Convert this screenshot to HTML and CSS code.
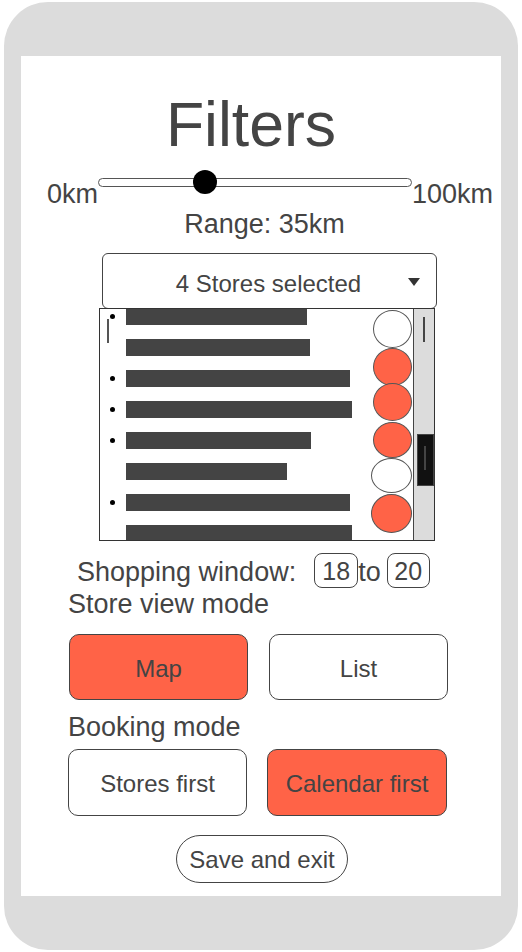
FILE: index.html
```html
<!DOCTYPE html>
<html>
<head>
<meta charset="utf-8">
<link rel="stylesheet" href="styles.css">
</head>
<body>
<div class="phone">
  <div class="screen">
    <h1 class="title">Filters</h1>

    <div class="slider-row">
      <span class="km">0km</span>
      <div class="track"><span class="knob"></span></div>
      <span class="km">100km</span>
    </div>
    <div class="range">Range: 35km</div>

    <div class="dropdown">
      <span class="dd-text">4 Stores selected</span>
      <span class="dd-arrow"></span>
    </div>

    <div class="list">
      <span class="caret"></span>
      <div class="rows">
        <div class="row"><span class="dot"></span><span class="bar w1"></span></div>
        <div class="row"><span class="dot off"></span><span class="bar w2"></span></div>
        <div class="row"><span class="dot"></span><span class="bar w3"></span></div>
        <div class="row"><span class="dot"></span><span class="bar w4"></span></div>
        <div class="row"><span class="dot"></span><span class="bar w5"></span></div>
        <div class="row"><span class="dot off"></span><span class="bar w6"></span></div>
        <div class="row"><span class="dot"></span><span class="bar w7"></span></div>
        <div class="row"><span class="dot off"></span><span class="bar w8"></span></div>
      </div>
      <div class="checks">
        <span class="chk c1"></span>
        <span class="chk c2 on"></span>
        <span class="chk c3 on"></span>
        <span class="chk c4 on"></span>
        <span class="chk c5"></span>
        <span class="chk c6 on"></span>
      </div>
      <div class="scrollbar">
        <span class="sb-line"></span>
        <div class="sb-thumb"><span class="sb-grip"></span></div>
      </div>
    </div>

    <div class="window-row">
      <span class="window-label">Shopping window:</span>
      <span class="num">18</span>
      <span class="to">to</span>
      <span class="num num2">20</span>
    </div>

    <div class="label label-view">Store view mode</div>
    <div class="btn-row view-row">
      <div class="btn active">Map</div>
      <div class="btn">List</div>
    </div>

    <div class="label label-booking">Booking mode</div>
    <div class="btn-row booking-row">
      <div class="btn">Stores first</div>
      <div class="btn active">Calendar first</div>
    </div>

    <div class="save">Save and exit</div>
  </div>
</div>
</body>
</html>
```

FILE: styles.css
```css
* { box-sizing: border-box; }

body {
  margin: 0;
  background: #ffffff;
  font-family: "Liberation Sans", Arial, sans-serif;
  color: #444444;
}

.phone {
  margin: 2px 4px;
  width: 514px;
  height: 948px;
  padding: 54px 17px;
  background: #dcdcdc;
  border-radius: 44px;
}

.screen {
  background: #ffffff;
  height: 840px;
  display: flex;
  flex-direction: column;
  align-items: flex-start;
}

.title {
  margin: 33px 0 0 0;
  width: 100%;
  padding-right: 20px;
  font-size: 62.5px;
  line-height: 70px;
  font-weight: normal;
  text-align: center;
  color: #444444;
}

/* slider */
.slider-row {
  margin-top: 11px;
  padding-left: 26px;
  display: flex;
  align-items: flex-start;
}
.km {
  font-size: 27px;
  line-height: 30px;
  margin-top: 9px;
}
.track {
  position: relative;
  width: 314px;
  height: 9px;
  margin-top: 8px;
  border: 1px solid #555555;
  border-radius: 5px;
  background: #ffffff;
}
.knob {
  position: absolute;
  left: 94px;
  top: -9px;
  width: 24px;
  height: 24px;
  border-radius: 50%;
  background: #000000;
}
.range {
  width: 100%;
  padding-left: 7px;
  font-size: 27px;
  line-height: 30px;
  text-align: center;
}

/* dropdown */
.dropdown {
  margin: 14px 0 0 81px;
  width: 335px;
  height: 56px;
  border: 1px solid #444444;
  border-radius: 6px;
  display: flex;
  align-items: center;
  padding: 5px 16px 0 26px;
  font-size: 24px;
  line-height: 28px;
}
.dd-text {
  flex: 1;
  text-align: center;
}
.dd-arrow {
  width: 0;
  height: 0;
  border-left: 6px solid transparent;
  border-right: 6px solid transparent;
  border-top: 8px solid #333333;
  margin-bottom: 4px;
}

/* list */
.list {
  position: relative;
  margin: -1px 0 0 78px;
  width: 336px;
  height: 233px;
  border: 1px solid #333333;
  background: #ffffff;
  display: flex;
  overflow: hidden;
}
.caret {
  position: absolute;
  left: 7px;
  top: 10px;
  width: 2px;
  height: 24px;
  background: #555555;
}
.rows {
  flex: 1;
  margin-top: -1px;
}
.row {
  display: flex;
  align-items: center;
  height: 17px;
  margin-bottom: 14px;
}
.dot {
  width: 5px;
  height: 5px;
  margin-left: 10px;
  border-radius: 50%;
  background: #000000;
}
.dot.off { visibility: hidden; }
.bar {
  height: 17px;
  margin-left: 11px;
  background: #444444;
}
.w1 { width: 181px; }
.w2 { width: 184px; }
.w3 { width: 224px; }
.w4 { width: 226px; }
.w5 { width: 185px; }
.w6 { width: 161px; }
.w7 { width: 224px; }
.w8 { width: 226px; }

.checks {
  width: 42px;
  padding: 1px 1px 0 0;
  display: flex;
  flex-direction: column;
  align-items: flex-end;
}
.chk {
  display: block;
  border: 1px solid #555555;
  border-radius: 50%;
  background: #ffffff;
  flex: none;
}
.chk.on { background: #ff6347; }
.c1 { width: 39px; height: 38px; }
.c2 { width: 39px; height: 38px; }
.c3 { width: 39px; height: 38px; margin-top: -3px; }
.c4 { width: 39px; height: 36px; margin-top: 1px; }
.c5 { width: 41px; height: 35px; }
.c6 { width: 41px; height: 39px; margin-top: 1px; }

.scrollbar {
  width: 21px;
  border-left: 1px solid #444444;
  background: #dcdcdc;
  display: flex;
  flex-direction: column;
  align-items: flex-start;
}
.sb-line {
  margin: 8px 0 0 9px;
  width: 2px;
  height: 25px;
  background: #444444;
}
.sb-thumb {
  margin: 92px 0 0 3px;
  width: 17px;
  height: 52px;
  background: #111111;
  border: 1px solid #444444;
  display: flex;
  align-items: flex-start;
}
.sb-grip {
  margin: 11px 0 0 6px;
  width: 2px;
  height: 24px;
  background: #444444;
}

/* shopping window */
.window-row {
  margin-top: 12px;
  padding-left: 56px;
  display: flex;
  align-items: center;
  font-size: 27px;
  line-height: 30px;
}
.window-label { margin-right: 18px; padding-top: 3px; }
.num {
  width: 44px;
  height: 35px;
  border: 1px solid #444444;
  border-radius: 8px;
  display: flex;
  align-items: center;
  justify-content: center;
  font-size: 25px;
}
.num2 { width: 43px; }
.to { margin-right: 6px; padding-top: 3px; }

.label {
  padding-left: 47px;
  font-size: 27px;
  line-height: 30px;
}
.label-view { margin-top: 1px; }
.label-booking { margin-top: 12px; }

.btn-row {
  display: grid;
}
.view-row {
  margin-top: 15px;
  padding-left: 48px;
  grid-template-columns: 179px 179px;
  column-gap: 21px;
  height: 66px;
}
.view-row .btn { padding-top: 3px; }
.booking-row {
  margin-top: 7px;
  padding-left: 47px;
  grid-template-columns: 179px 180px;
  column-gap: 20px;
  height: 67px;
}
.booking-row .btn { padding-top: 2px; }
.btn {
  border: 1px solid #444444;
  border-radius: 10px;
  background: #ffffff;
  display: flex;
  align-items: center;
  justify-content: center;
  font-size: 24px;
}
.btn.active { background: #ff6347; }

.save {
  margin: 19px 0 0 155px;
  width: 172px;
  height: 48px;
  border: 1px solid #444444;
  border-radius: 24px;
  display: flex;
  align-items: center;
  justify-content: center;
  padding-top: 2px;
  font-size: 24px;
}
```
